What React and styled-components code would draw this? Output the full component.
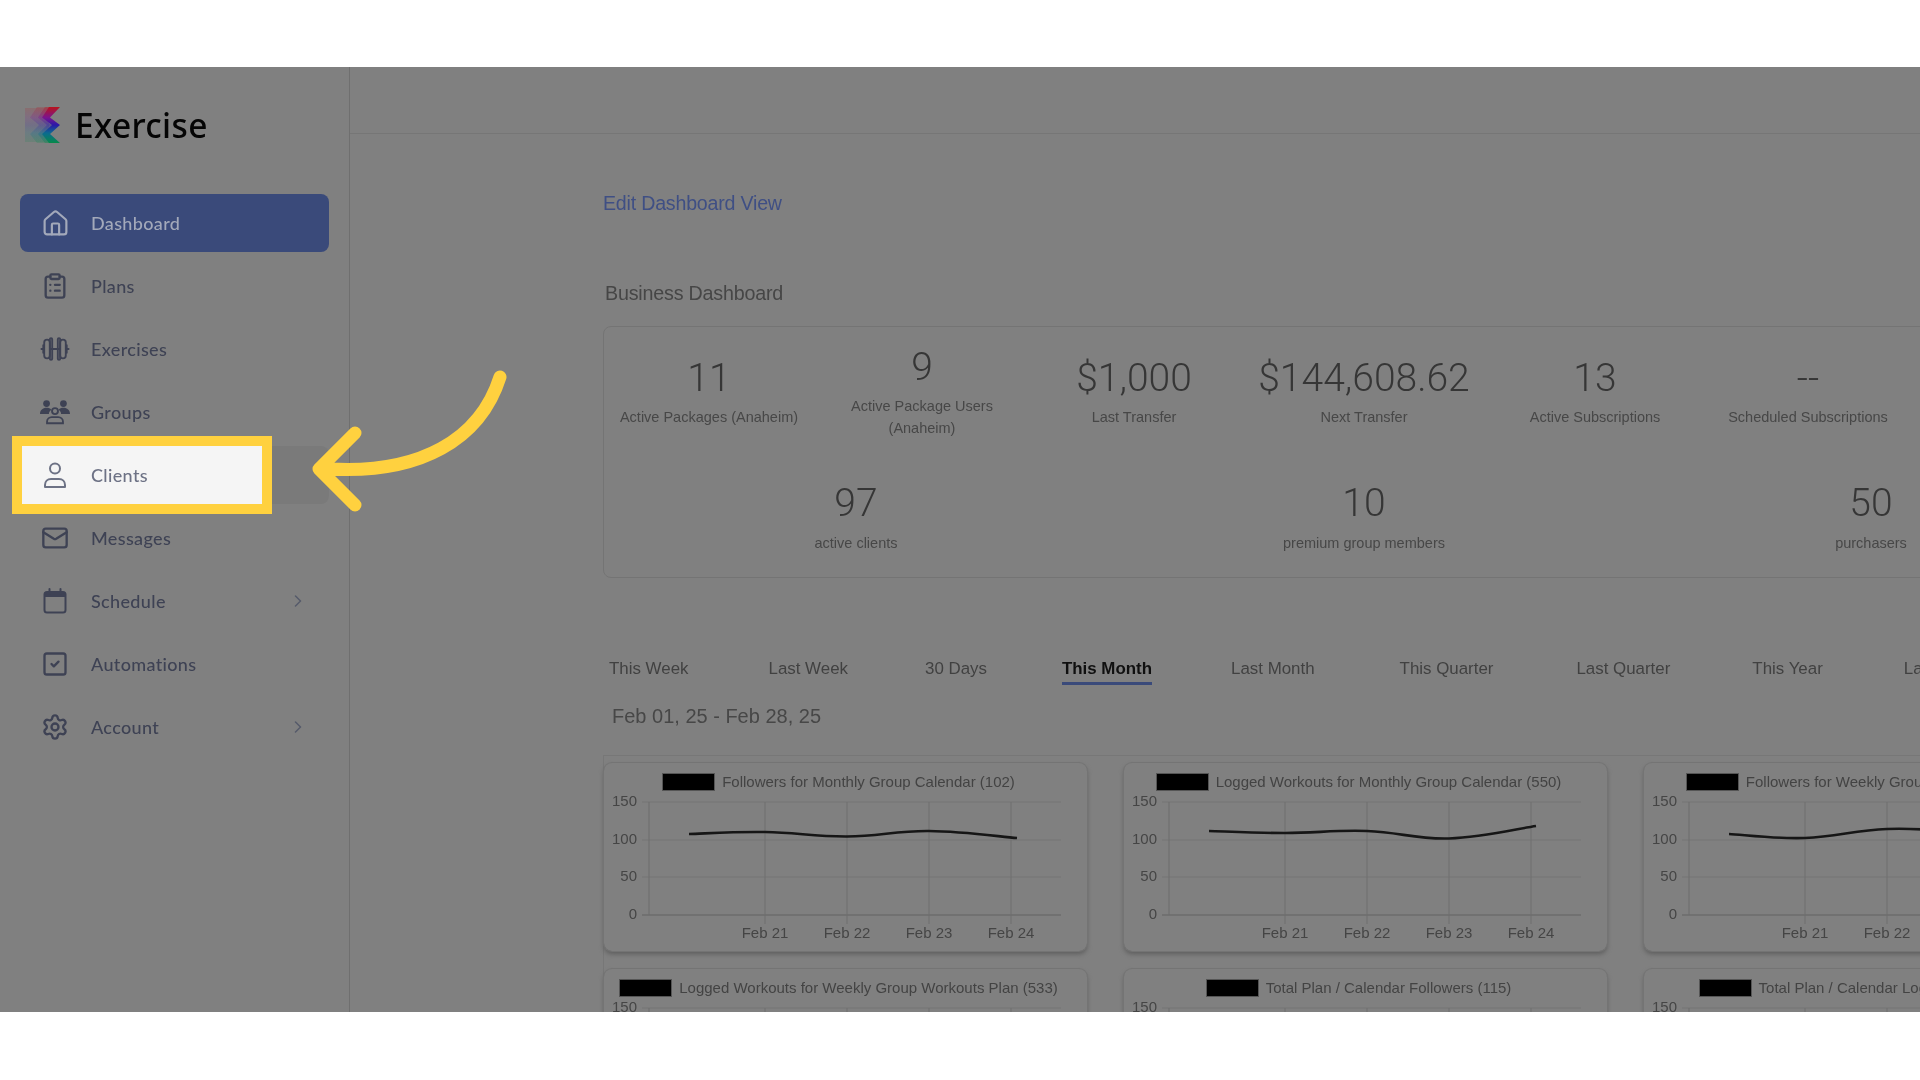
import React from "react";
import styled, { createGlobalStyle } from "styled-components";
import { House, ClipboardList, Mail, SquareCheck, Settings, ChevronRight } from "lucide-react";

const Global = createGlobalStyle`
  html, body { margin: 0; padding: 0; background: #fff; overflow: hidden; }
  * { box-sizing: border-box; }
`;

const Page = styled.div`
  position: relative;
  width: 1920px;
  height: 1080px;
  padding: 67px 0 68px;
  overflow: hidden;
  background: #fff;
`;
const Frame = styled.div`
  display: flex;
  height: 945px;
  background: #808080;
  overflow: hidden;
`;
const Sidebar = styled.aside`
  flex: 0 0 350px;
  padding: 40px 20px 0 0;
  border-right: 1px solid #6f6f6f;
`;
const Brand = styled.div`
  display: flex;
  align-items: center;
  gap: 14px;
  height: 36px;
  padding-left: 25px;
  filter: blur(0.5px);
`;
const BrandName = styled.span`
  font: 500 33.5px/36px "Noto Sans", sans-serif;
  color: #050505;
  letter-spacing: 0.35px;
`;
const Nav = styled.nav`
  display: flex;
  flex-direction: column;
  gap: 5px;
  margin: 51px 0 0 20px;
  width: 309px;
`;
const NavRow = styled.div`
  position: relative;
  display: flex;
  align-items: center;
  gap: 21px;
  height: 58px;
  padding: 0 21px 0 20px;
  border-radius: 8px;
  background: ${(p) => (p.$active ? "#3a4a7a" : p.$hover ? "#7a7a7a" : "transparent")};
  color: ${(p) => (p.$active ? "#a3a9ba" : "#3e4254")};
`;
const IconBox = styled.span`
  flex: 0 0 30px;
  width: 30px;
  height: 30px;
  display: flex;
  align-items: center;
  justify-content: center;
  filter: blur(0.4px);
`;
const NavLabel = styled.span`
  flex: 1;
  font: 500 18px/24px Lato, sans-serif;
  letter-spacing: 0.35px;
  filter: blur(0.4px);
`;
const Chevron = styled(ChevronRight)`
  color: #555a6a;
  filter: blur(0.4px);
`;
const Spotlight = styled.div`
  position: absolute;
  left: -8px;
  top: -10px;
  width: 260px;
  height: 78px;
  display: flex;
  align-items: center;
  gap: 21px;
  padding-left: 18px;
  background: #f5f5f5;
  border: 10px solid #ffd13f;
  color: #6d7285;
`;
const Main = styled.main`
  flex: 1;
  min-width: 0;
`;
const TopBar = styled.header`
  height: 67px;
  border-bottom: 1px solid #767676;
`;
const Content = styled.div`
  padding: 57px 0 0 253px;
  filter: blur(0.5px);
`;
const EditLink = styled.div`
  font: 400 19.6px/24px "Liberation Sans", sans-serif;
  color: #3f4f84;
  letter-spacing: -0.2px;
`;
const SectionTitle = styled.div`
  margin: 66px 0 0 2px;
  font: 400 19.7px/24px "Liberation Sans", sans-serif;
  color: #464646;
  letter-spacing: -0.2px;
`;
const StatsPanel = styled.section`
  width: 1530px;
  height: 252px;
  margin-top: 21px;
  border: 1px solid #747474;
  border-radius: 8px;
`;
const StatsRow = styled.div`
  display: grid;
  grid-template-columns: ${(p) => p.$cols};
  height: ${(p) => p.$h}px;
  padding-top: ${(p) => p.$top}px;
`;
const Stat = styled.div`
  text-align: center;
  margin-top: ${(p) => p.$up || 0}px;
`;
const StatValue = styled.div`
  font: 300 39px/44px Roboto, sans-serif;
  color: #363636;
`;
const StatLabel = styled.div`
  margin-top: ${(p) => p.$gap}px;
  font: 400 14.5px/22px "Liberation Sans", sans-serif;
  color: #474747;
`;
const Tabs = styled.div`
  display: flex;
  margin: 81px 0 0 6px;
  white-space: nowrap;
`;
const Tab = styled.div`
  height: 26px;
  margin-left: ${(p) => p.$lead}px;
  font: ${(p) => (p.$active ? 700 : 400)} 16.9px/20px "Liberation Sans", sans-serif;
  color: ${(p) => (p.$active ? "#101010" : "#414141")};
  border-bottom: 3px solid ${(p) => (p.$active ? "#3a4a7a" : "transparent")};
`;
const DateRange = styled.div`
  margin: 20px 0 0 9px;
  font: 400 20px/22px "Liberation Sans", sans-serif;
  color: #474747;
`;
const CardWrap = styled.div`
  display: grid;
  grid-template-columns: repeat(3, 483px);
  gap: 18px 37px;
  width: 1600px;
  margin-top: 28px;
  padding: 7px 0 0;
  border-top: 1px solid #777;
  border-left: 1px solid #777;
`;
const Card = styled.article`
  height: 188px;
  border-radius: 8px;
  box-shadow: 0 0 0 1px #747474, 0 3px 5px #5c5c5c;
`;
const Legend = styled.div`
  display: flex;
  justify-content: center;
  align-items: center;
  gap: 7px;
  height: 32px;
  padding: 6px 14px 0 0;
`;
const Swatch = styled.span`
  width: 53px;
  height: 18px;
  background: #000;
  border: 1px solid #555;
`;
const LegendText = styled.span`
  font: 400 15px/18px "Liberation Sans", sans-serif;
  color: #434343;
  white-space: nowrap;
`;
const ChartSvg = styled.svg`
  display: block;
  font: 400 15px "Liberation Sans", sans-serif;
  fill: #454545;
`;
const ArrowSvg = styled.svg`
  position: absolute;
  left: 0;
  top: 0;
  pointer-events: none;
`;

const strokeIcon = { fill: "none", stroke: "currentColor", strokeWidth: 2, strokeLinecap: "round", strokeLinejoin: "round" };

const DumbbellIcon = () => (
  <svg width="32" height="26" viewBox="0 0 32 26" {...strokeIcon}>
    <path d="M1.5 13h2M30.5 13h-2M11 13h10" />
    <path d="M3.5 9v8M28.5 9v8" />
    <rect x="4.5" y="3" width="6" height="20" rx="3" />
    <rect x="10.5" y="1.5" width="2.5" height="23" rx="1.2" />
    <rect x="19" y="1.5" width="2.5" height="23" rx="1.2" />
    <rect x="21.5" y="3" width="6" height="20" rx="3" />
  </svg>
);
const GroupIcon = () => (
  <svg width="32" height="26" viewBox="0 0 32 26">
    <g fill="currentColor">
      <circle cx="7" cy="4" r="3.6" />
      <circle cx="25" cy="4" r="3.6" />
      <path d="M0 15c0-4 3-6.500 7-6.500 2.200 0 4 .7 5 2-1.600 1.200-2.500 2.700-2.500 4.500z" />
      <path d="M32 15c0-4-3-6.500-7-6.500-2.200 0-4 .7-5 2 1.600 1.200 2.500 2.700 2.500 4.500z" />
    </g>
    <g fill="none" stroke="currentColor" strokeWidth="2">
      <circle cx="16" cy="12" r="3.200" />
      <path d="M7.500 25v-1.500c0-3 2.500-5 5-5h7c2.500 0 5 2 5 5V25z" />
    </g>
  </svg>
);
const PersonIcon = () => (
  <svg width="24" height="26" viewBox="0 0 24 26" {...strokeIcon}>
    <circle cx="12" cy="6.500" r="5" />
    <path d="M2 25v-2c0-3.500 2.500-6 6-6h8c3.500 0 6 2.500 6 6v2z" />
  </svg>
);
const CalendarIcon = () => (
  <svg width="24" height="26" viewBox="0 0 24 26">
    <path d="M1.500 9h21V6a2 2 0 0 0-2-2h-17a2 2 0 0 0-2 2z" fill="currentColor" />
    <rect x="1.500" y="4" width="21" height="20.500" rx="2.500" fill="none" stroke="currentColor" strokeWidth="2" />
    <path d="M6.500 1v5M17.500 1v5" stroke="currentColor" strokeWidth="2" strokeLinecap="round" />
  </svg>
);
const LogoMark = () => (
  <svg width="36" height="36" viewBox="0 0 36 36">
    <defs>
      <linearGradient id="logoFill" x1="0" y1="0" x2="0" y2="1">
        <stop offset="0" stopColor="#b8141c" />
        <stop offset="0.3" stopColor="#7a1490" />
        <stop offset="0.5" stopColor="#2a18a8" />
        <stop offset="0.72" stopColor="#0c6a90" />
        <stop offset="1" stopColor="#078a4a" />
      </linearGradient>
    </defs>
    <path d="M0 1h24v34H0z" fill="url(#logoFill)" opacity="0.16" />
    <path d="M12 0H26L17 10.500L26 18L17 27L26 36H12L5 27L14 18L5 10.500Z" fill="url(#logoFill)" opacity="0.22" />
    <path d="M20 0H32L23 10.500L32 18L23 27L32 36H20L13 27L22 18L13 10.500Z" fill="url(#logoFill)" opacity="0.35" />
    <path d="M24 0H35L25 10.500L35 18L25 27L35 36H24L17 27L27 18L17 10.500Z" fill="url(#logoFill)" />
  </svg>
);

const navItems = [
  { label: "Dashboard", icon: <House size={29} strokeWidth={1.8} />, active: true },
  { label: "Plans", icon: <ClipboardList size={28} strokeWidth={2} /> },
  { label: "Exercises", icon: <DumbbellIcon /> },
  { label: "Groups", icon: <GroupIcon /> },
  { label: "Clients", icon: <PersonIcon />, spotlight: true },
  { label: "Messages", icon: <Mail size={28} strokeWidth={2} /> },
  { label: "Schedule", icon: <CalendarIcon />, more: true },
  { label: "Automations", icon: <SquareCheck size={28} strokeWidth={2} /> },
  { label: "Account", icon: <Settings size={28} strokeWidth={2} />, more: true },
];

const topStats = [
  { v: "11", l: ["Active Packages (Anaheim)"] },
  { v: "9", l: ["Active Package Users", "(Anaheim)"], up: -11 },
  { v: "$1,000", l: ["Last Transfer"] },
  { v: "$144,608.62", l: ["Next Transfer"] },
  { v: "13", l: ["Active Subscriptions"] },
  { v: "--", l: ["Scheduled Subscriptions"] },
];
const bottomStats = [
  { v: "97", l: "active clients" },
  { v: "10", l: "premium group members" },
  { v: "50", l: "purchasers" },
];
const tabs = [
  { t: "This Week", lead: 0 },
  { t: "Last Week", lead: 80 },
  { t: "30 Days", lead: 77 },
  { t: "This Month", lead: 75, active: true },
  { t: "Last Month", lead: 79 },
  { t: "This Quarter", lead: 85 },
  { t: "Last Quarter", lead: 83 },
  { t: "This Year", lead: 82 },
  { t: "Last Year", lead: 81 },
];

const cards = [
  { t: "Followers for Monthly Group Calendar (102)", p: [[86, 40], [162, 38], [244, 42.5], [326, 37], [414, 44]] },
  { t: "Logged Workouts for Monthly Group Calendar (550)", p: [[86, 37], [162, 39], [244, 37], [326, 44.5], [413, 32]] },
  { t: "Followers for Weekly Group Workouts Plan (109)", p: [[86, 40], [162, 44], [244, 35], [326, 38], [413, 41]] },
  { t: "Logged Workouts for Weekly Group Workouts Plan (533)", p: [[86, 40], [162, 38], [244, 42], [326, 37], [414, 44]] },
  { t: "Total Plan / Calendar Followers (115)", p: [[86, 40], [162, 38], [244, 42], [326, 37], [414, 44]] },
  { t: "Total Plan / Calendar Logged Workouts (590)", p: [[86, 40], [162, 38], [244, 42], [326, 37], [414, 44]] },
];

const smooth = (pts) => {
  let d = `M${pts[0][0]} ${pts[0][1]}`;
  for (let i = 0; i < pts.length - 1; i++) {
    const p0 = pts[Math.max(i - 1, 0)];
    const p1 = pts[i];
    const p2 = pts[i + 1];
    const p3 = pts[Math.min(i + 2, pts.length - 1)];
    const c1x = p1[0] + (p2[0] - p0[0]) * 0.2;
    const c1y = p1[1] + (p2[1] - p0[1]) * 0.2;
    const c2x = p2[0] - (p3[0] - p1[0]) * 0.2;
    const c2y = p2[1] - (p3[1] - p1[1]) * 0.2;
    d += ` C${c1x} ${c1y} ${c2x} ${c2y} ${p2[0]} ${p2[1]}`;
  }
  return d;
};

const ticksY = [[150, 7], [100, 45], [50, 82], [0, 120]];
const ticksX = [["Feb 21", 161], ["Feb 22", 243], ["Feb 23", 325], ["Feb 24", 407]];

const LineChart = ({ points }) => (
  <ChartSvg width="483" height="156" viewBox="0 0 483 156">
    {ticksY.map(([label, y]) => (
      <g key={label}>
        <line x1="38" x2="457" y1={y} y2={y} stroke={label === 0 ? "#636363" : "#747474"} />
        <text x="33" y={y + 4} textAnchor="end">{label}</text>
      </g>
    ))}
    <line x1="45" x2="45" y1="7" y2="120" stroke="#6c6c6c" />
    {ticksX.map(([label, x]) => (
      <g key={label}>
        <line x1={x} x2={x} y1="7" y2="129" stroke="#6f6f6f" />
        <text x={x} y="143" textAnchor="middle">{label}</text>
      </g>
    ))}
    <path d={smooth(points)} transform="translate(-1 -1)" fill="none" stroke="#161616" strokeWidth="2.600" />
  </ChartSvg>
);

export default function App() {
  return (
    <Page>
      <Global />
      <Frame>
        <Sidebar>
          <Brand>
            <LogoMark />
            <BrandName>Exercise</BrandName>
          </Brand>
          <Nav>
            {navItems.map((item) =>
              item.spotlight ? (
                <NavRow key={item.label} $hover>
                  <Spotlight>
                    <IconBox>{item.icon}</IconBox>
                    <NavLabel>{item.label}</NavLabel>
                  </Spotlight>
                </NavRow>
              ) : (
                <NavRow key={item.label} $active={item.active}>
                  <IconBox>{item.icon}</IconBox>
                  <NavLabel>{item.label}</NavLabel>
                  {item.more && <Chevron size={20} strokeWidth={1.8} />}
                </NavRow>
              )
            )}
          </Nav>
        </Sidebar>
        <Main>
          <TopBar />
          <Content>
            <EditLink>Edit Dashboard View</EditLink>
            <SectionTitle>Business Dashboard</SectionTitle>
            <StatsPanel>
              <StatsRow $cols="210px 216px 208px 252px 210px 216px" $h={143} $top={29}>
                {topStats.map((s) => (
                  <Stat key={s.v} $up={s.up}>
                    <StatValue>{s.v}</StatValue>
                    <StatLabel $gap={6}>{s.l.map((line) => <div key={line}>{line}</div>)}</StatLabel>
                  </Stat>
                ))}
              </StatsRow>
              <StatsRow $cols="504px 512px 502px" $h={100} $top={11}>
                {bottomStats.map((s) => (
                  <Stat key={s.v}>
                    <StatValue>{s.v}</StatValue>
                    <StatLabel $gap={7}>{s.l}</StatLabel>
                  </Stat>
                ))}
              </StatsRow>
            </StatsPanel>
            <Tabs>
              {tabs.map((t) => <Tab key={t.t} $lead={t.lead} $active={t.active}>{t.t}</Tab>)}
            </Tabs>
            <DateRange>Feb 01, 25 - Feb 28, 25</DateRange>
            <CardWrap>
              {cards.map((c) => (
                <Card key={c.t}>
                  <Legend>
                    <Swatch />
                    <LegendText>{c.t}</LegendText>
                  </Legend>
                  <LineChart points={c.p} />
                </Card>
              ))}
            </CardWrap>
          </Content>
        </Main>
      </Frame>
      <ArrowSvg width="1920" height="1080" viewBox="0 0 1920 1080">
        <path d="M500 377C480 440 420 474 330 469M355 433L319 469L355 505" fill="none" stroke="#ffd13f" strokeWidth="13" strokeLinecap="round" strokeLinejoin="round" />
      </ArrowSvg>
    </Page>
  );
}
